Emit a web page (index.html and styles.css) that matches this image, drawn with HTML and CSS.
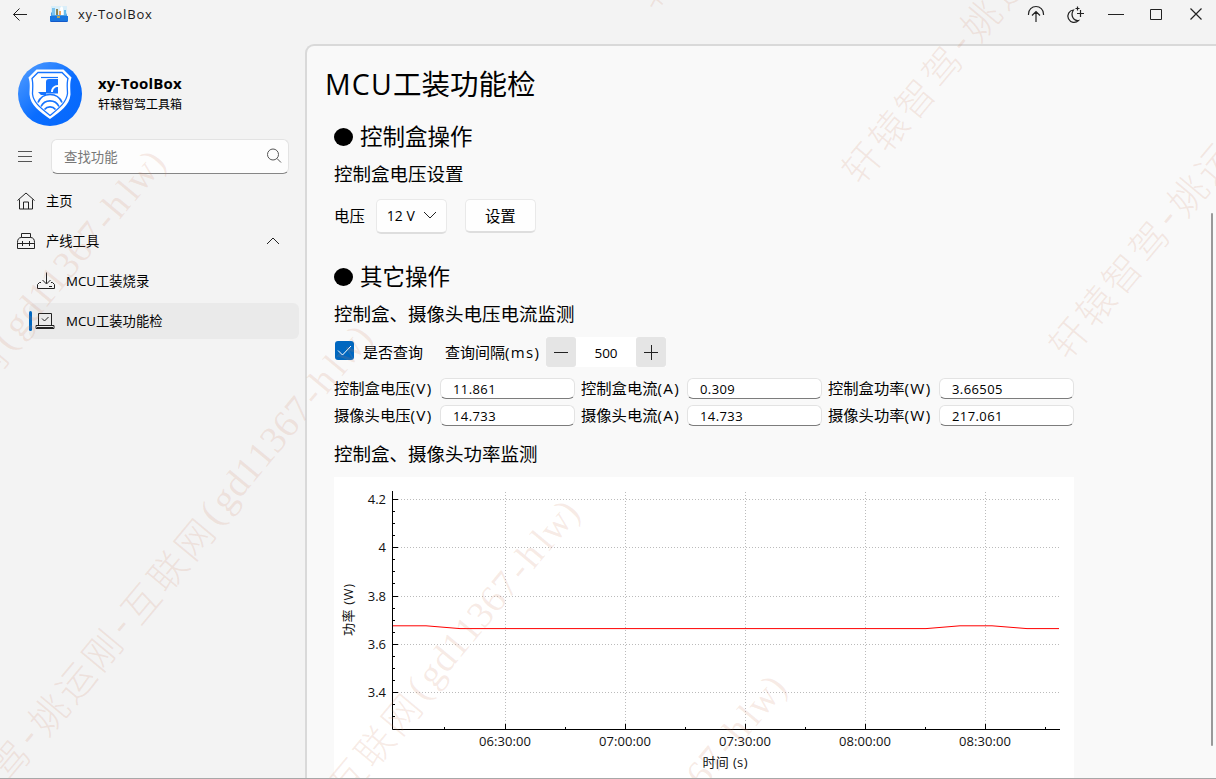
FILE: index.html
```html
<!DOCTYPE html>
<html lang="zh-CN">
<head>
<meta charset="utf-8">
<title>xy-ToolBox</title>
<link rel="stylesheet" href="styles.css">
</head>
<body>
<div class="window">
  <header class="titlebar">
    <svg class="back" width="40" height="28" viewBox="0 0 40 28"><path d="M27 14.5H13.5M19.5 8.5l-6 6 6 6"/></svg>
    <svg class="app-icon" width="20" height="20" viewBox="0 0 20 20">
      <rect x="2" y="2" width="16" height="10" fill="#d9eef9"/>
      <path d="M3 4h3v8H3z" fill="#7cc4ee"/><path d="M7 5h2v7H7z" fill="#8b8450"/><path d="M11 4l2-2 1 2v8h-2z" fill="#fff"/><path d="M15 6h2v6h-2z" fill="#66bdf0"/>
      <path d="M10 7h2v5h-2z" fill="#f0a860"/><path d="M2 9l1-1v3h14l1-2v4H2z" fill="#4c9fe4"/>
      <path d="M1 12h18v5q0 1-1 1H2q-1 0-1-1z" fill="#1976df"/><path d="M2 17h16v1H2z" fill="#1459c8"/><path d="M8 12h3v2H8z" fill="#b5a15a"/>
    </svg>
    <span class="app-name">xy-ToolBox</span>
    <nav class="caption">
      <svg width="40" height="28" viewBox="0 0 40 28"><path stroke-width="1.200" d="M12.500 15v-1a7.500 7.500 0 0 1 15 0v1M20 22V12M16 15.500l4-4 4 4"/></svg>
      <svg width="40" height="28" viewBox="0 0 40 28"><path stroke-width="1.200" d="M17.500 10a6.200 6.200 0 1 0 5 10.500c-5 .8-8.500-5.500-5-10.500zM19.500 8.500h4M21.500 6.500v4M21 13.500h7M24.500 10v7"/></svg>
      <svg width="40" height="28" viewBox="0 0 40 28"><path d="M12 14.500h16"/></svg>
      <svg width="40" height="28" viewBox="0 0 40 28"><path d="M14.500 9.500h11v10h-11z"/></svg>
      <svg width="40" height="28" viewBox="0 0 40 28"><path stroke-width="1.200" d="M14.500 8.500l11 11M25.500 8.500l-11 11"/></svg>
    </nav>
  </header>
  <div class="body">
    <aside class="sidebar">
      <div class="profile">
        <svg width="64" height="64" viewBox="0 0 64 64">
          <defs><linearGradient id="disc" x1="0" y1="0" x2="1" y2="1"><stop offset="0" stop-color="#56a0ff"/><stop offset=".55" stop-color="#0a6dff"/><stop offset="1" stop-color="#0567fb"/></linearGradient></defs>
          <circle cx="32" cy="32" r="32" fill="url(#disc)"/>
          <path d="M18.500 7.500h27l8 8c-2 6-1 11-1 17-1 11-10 17-20.500 24.500C21.500 49.500 12.500 43.500 11.500 32.500c0-6 1-11-1-17z" fill="#fff"/>
          <path d="M20 10.500h24l6 6c-1.500 5-.5 10-.5 15-1 9-9 15-17.500 22C23.500 46.500 15.500 41 14.500 32c0-5 1-10-.5-15.500z" fill="none" stroke="#1674ff" stroke-width="1.300"/>
          <path d="M23 15.500h17" stroke="#1674ff" stroke-width="1.200"/>
          <path d="M31 17h9v6c-4 0-7 3-7 7h-5V20q0-3 3-3z" fill="#1674ff"/><path d="M35 30c0-3 2-5 5-5v5zM20 30h20v1.500H28V33h-5z" fill="#1674ff"/>
          <g fill="none" stroke="#1674ff" stroke-width="1.700"><path d="M20 40.500a13 13 0 0 1 24 0M23 44.500a10 10 0 0 1 18 0M26.500 47.500a7 7 0 0 1 11 0"/></g>
        </svg>
        <div class="names"><strong>xy-ToolBox</strong><span>轩辕智驾工具箱</span></div>
      </div>
      <div class="search-row">
        <svg width="16" height="16" viewBox="0 0 16 16"><path d="M1 2.500h14M1 7.500h14M1 12.500h14"/></svg>
        <div class="search"><span>查找功能</span>
          <svg width="16" height="16" viewBox="0 0 16 16"><circle cx="7" cy="6.500" r="5.500"/><path d="M11 10.500l4 4"/></svg></div>
      </div>
      <ul class="menu">
        <li><svg width="20" height="20" viewBox="0 0 20 20"><path d="M1.500 9.500L10 2l8.500 7.500M3.500 8.500v9.500h13V8.500M7.500 18v-7h5v7"/></svg><span>主页</span></li>
        <li><svg width="20" height="20" viewBox="0 0 20 20"><path d="M5.500 6.500v-4h9v4M1.500 11.500q0-5 4-5h9q4 0 4 5v6h-17zM1.500 12.500h17M6.500 10v5M13.500 10v5"/></svg><span>产线工具</span>
          <svg class="chevron" width="14" height="10" viewBox="0 0 14 10"><path d="M1 8l6-6 6 6"/></svg></li>
        <li class="child"><svg width="20" height="20" viewBox="0 0 20 20"><path d="M10.500 1.500v11M6.500 9l4 4 4-4M5 11.500H3.500l-2 2v4h17v-4l-2-2H15M13 15.500h3"/></svg><span>MCU工装烧录</span></li>
        <li class="child active"><svg width="20" height="20" viewBox="0 0 20 20"><path d="M3.500 14.500v-12h13v12M7 7.500l2.500 2.500 4-4M1 14.500h18v3H1zM2 16.500h16"/></svg><span>MCU工装功能检</span></li>
      </ul>
    </aside>
    <main class="panel">
      <h1><span class="latin">MCU</span>工装功能检</h1>
      <section class="control">
        <h2><i></i>控制盒操作</h2>
        <h3>控制盒电压设置</h3>
        <div class="voltage-row">
          <label>电压</label>
          <div class="combo">12 V<svg width="14" height="10" viewBox="0 0 14 10"><path d="M1 1l6 6 6-6"/></svg></div>
          <button class="push">设置</button>
        </div>
      </section>
      <section class="others">
        <h2><i></i>其它操作</h2>
        <h3>控制盒、摄像头电压电流监测</h3>
        <div class="query-row">
          <span class="check"><svg width="19" height="19" viewBox="0 0 19 19"><path d="M3 9.500l4.500 4.500L16 5"/></svg></span>
          <span class="check-label">是否查询</span>
          <span class="interval">查询间隔<span class="unit">(ms)</span></span>
          <div class="stepper">
            <svg width="30" height="30" viewBox="0 0 30 30"><path d="M8 15.500h14"/></svg>
            <span>500</span>
            <svg width="30" height="30" viewBox="0 0 30 30"><path d="M8 15.500h14M15.500 8v15"/></svg>
          </div>
        </div>
        <div class="readings">
          <label>控制盒电压<span class="unit">(V)</span></label><div class="field">11.861</div>
          <label>控制盒电流<span class="unit">(A)</span></label><div class="field">0.309</div>
          <label>控制盒功率<span class="unit">(W)</span></label><div class="field">3.66505</div>
          <label>摄像头电压<span class="unit">(V)</span></label><div class="field">14.733</div>
          <label>摄像头电流<span class="unit">(A)</span></label><div class="field">14.733</div>
          <label>摄像头功率<span class="unit">(W)</span></label><div class="field">217.061</div>
        </div>
        <h3 class="chart-title">控制盒、摄像头功率监测</h3>
        <svg class="chart" width="740" height="302" viewBox="334 477 740 302">
          <path class="grid" d="M398 499.500H1059M398 547.500H1059M398 596.500H1059M398 644.500H1059M398 692.500H1059M505.500 492V724M625.500 492V724M745.500 492V724M865.500 492V724M985.500 492V724"/>
          <path class="axis" d="M392.500 491V729.500H1060M393 499.500h5M393 547.500h5M393 596.500h5M393 644.500h5M393 692.500h5M505.500 729v-5M625.500 729v-5M745.500 729v-5M865.500 729v-5M985.500 729v-5"/>
          <path class="axis" d="M393 511.500h2M393 523.500h2M393 535.500h2M393 559.500h2M393 571.500h2M393 583.500h2M393 608.500h2M393 620.500h2M393 632.500h2M393 656.500h2M393 668.500h2M393 680.500h2M393 704.500h2M393 716.500h2M444.500 729v-2M565.500 729v-2M685.500 729v-2M805.500 729v-2M925.500 729v-2M1045.500 729v-2"/>
          <path class="series" d="M393 625.800H426L460 628.600H926L960 625.800H992L1027 628.600H1059"/>
          <g class="ylab"><text x="386" y="504">4.2</text><text x="386" y="552">4</text><text x="386" y="601">3.8</text><text x="386" y="649">3.6</text><text x="386" y="697">3.4</text></g>
          <g class="xlab"><text x="505" y="746" textLength="52">06:30:00</text><text x="625" y="746" textLength="52">07:00:00</text><text x="745" y="746" textLength="52">07:30:00</text><text x="865" y="746" textLength="52">08:00:00</text><text x="985" y="746" textLength="52">08:30:00</text>
            <text x="725" y="767" textLength="45">时间 (s)</text><text transform="translate(353 610) rotate(-90)" textLength="52">功率 (W)</text></g>
        </svg>
      </section>
      <div class="scrollbar"></div>
    </main>
  </div>
  <svg class="watermark" width="1216" height="779" viewBox="0 0 1216 779"></svg>
</div>
<script src="watermark.js"></script>
</body>
</html>
```
FILE: watermark.js
```js
// Tiles the diagonal user watermark across the whole window.
const layer = document.querySelector('.watermark');
const label = '轩辕智驾-姚运刚-互联网(gd11367-hlw)';
const full = 41.6, half = 19.4;
const chars = [...label];
const isLatin = ch => ch.charCodeAt(0) < 256;
let cursor = -full / 2;
const xs = chars.map(ch => {
  const advance = isLatin(ch) ? half : full;
  const centre = cursor + advance / 2;
  cursor += advance;
  return centre.toFixed(1);
});
const ys = chars.map(ch => isLatin(ch) ? 9 : 14);
const origins = [[654, -12], [861, 163], [1068, 338], [-277, 682], [-70, 857], [137, 1032], [344, 1207]];
for (const [x, y] of origins.slice(0, 3)) addLine(x + 1, y);
for (const [x, y] of origins.slice(3)) addLine(x, y);
// The tile one step above the last row carries the lower-centre line.
function addLine(x, y) {
  const text = document.createElementNS('http://www.w3.org/2000/svg', 'text');
  text.setAttribute('transform', `translate(${x} ${y}) rotate(-50.2)`);
  text.setAttribute('x', xs.join(' '));
  text.setAttribute('y', ys.join(' '));
  text.textContent = label;
  layer.append(text);
}
```
FILE: styles.css
```css
* { box-sizing: border-box; }
body { margin: 0; font-family: "Open Sans", "Noto Sans CJK SC", sans-serif; color: #000; font-size: 13px; }
svg { fill: none; stroke: #222; stroke-width: 1; flex: none; display: block; }
h1, h2, h3, ul { margin: 0; padding: 0; font-weight: 400; }
.window { position: relative; width: 1216px; height: 779px; overflow: hidden; background: #f3f3f3; border-bottom: 1px solid #a8a8a8; display: flex; flex-direction: column; white-space: nowrap; }
.titlebar { height: 44px; display: flex; align-items: flex-start; }
.app-icon { stroke: none; margin: 4px 9px 0 9px; }
.app-name { line-height: 28px; letter-spacing: .8px; color: #1a1a1a; }
.caption { display: flex; margin-left: auto; }
.body { flex: 1; display: flex; min-height: 0; }
.sidebar { width: 305px; padding-top: 18px; }
.profile { display: flex; gap: 16px; padding-left: 18px; height: 64px; }
.profile svg { stroke: none; }
.names { display: flex; flex-direction: column; padding-top: 10px; }
.names strong { font-size: 15px; line-height: 22px; letter-spacing: .2px; }
.names span { font-size: 12px; line-height: 21px; }
.search-row { display: flex; gap: 18px; padding: 13px 0 0 17px; align-items: center; }
.search-row svg { stroke: #555; }
.search { width: 238px; height: 35px; padding: 0 6px 1px 12px; border: 1px solid #e3e3e3; border-bottom: 1.500px solid #868686; border-radius: 6px; background: #fdfdfd; display: flex; align-items: center; justify-content: space-between; color: #777; font-size: 13.4px; }
.menu { list-style: none; padding: 9px 6px 0 5px; display: flex; flex-direction: column; gap: 4px; }
.menu li { height: 36px; display: flex; align-items: center; gap: 10px; padding-left: 11px; border-radius: 6px; font-size: 13.300px; }
.menu li span { padding-bottom: 1px; }
.menu .child { margin-left: 25px; padding-left: 6px; }
.menu .active { background: #eaeaea; margin-left: 24px; padding-left: 0; gap: 10px; }
.menu .active::before { content: ""; width: 3px; height: 20px; border-radius: 2px; background: #0067c0; margin-right: -6px; }
.menu .active svg { margin-left: -1px; margin-right: 1px; }
.chevron { margin: 0 19px 0 auto; }
.panel { position: relative; flex: 1; border: 2px solid #d9d9d9; border-width: 2px 0 0 2px; border-radius: 9px 0 0 0; background: #f9f9f9; padding: 16px 0 0 18px; overflow: hidden; }
h1 { font-size: 28.5px; line-height: 44px; height: 44px; }
.latin { letter-spacing: 1.2px; }
.control, .others { padding-left: 9px; }
h2 { font-size: 22.500px; line-height: 34px; display: flex; align-items: center; gap: 7px; }
h2 i { width: 19px; height: 18px; border-radius: 50%; background: #000; }
.control { padding-top: 14px; }
h3 { font-size: 18.500px; line-height: 28px; margin-top: 6px; }
.voltage-row { display: flex; align-items: center; height: 36px; margin-top: 10px; font-size: 15.400px; }
.voltage-row label { padding-bottom: 1px; }
.combo { width: 71px; height: 35px; margin-left: 11px; padding: 0 9px 0 10px; display: flex; align-items: center; justify-content: space-between; border: 1px solid #e9e9e9; border-bottom: 2px solid #dedede; border-radius: 5px; background: #fefefe; font-size: 14px; }
.push { width: 71px; height: 34px; margin-left: 18px; border: 1px solid #e9e9e9; border-bottom: 2px solid #dedede; border-radius: 5px; background: #fefefe; font: inherit; padding: 0; }
.others { padding-top: 26px; }
.query-row { display: flex; align-items: center; height: 30px; margin-top: 9px; font-size: 15px; line-height: 26px; }
.check-label, .interval { padding-bottom: 1px; }
.check { background: #0067c0; border-radius: 3px; margin: -4px 9px 0 1px; }
.check svg { stroke: #fff; }
.interval { width: 101px; margin-left: 22px; }
.unit { letter-spacing: 1.3px; }
.stepper { display: flex; height: 30px; background: #fff; }
.stepper svg { background: #e5e5e5; border-radius: 3px; }
.stepper span { width: 60px; text-align: center; line-height: 32px; font-size: 13.500px; }
.readings { display: grid; grid-template-columns: 106px 141px 106px 141px 111px 135px; grid-auto-rows: 21px; row-gap: 6px; margin-top: 11px; font-size: 15.300px; }
.readings label { line-height: 21px; }
.field { width: 135px; border: 1px solid #e3e3e3; border-bottom-color: #7c7c7c; border-radius: 6px; background: #fff; padding-left: 12px; font-size: 13px; letter-spacing: .4px; line-height: 20px; }
.chart-title { margin-top: 14px; }
.chart { background: #fff; margin-top: 9px; }
.grid { stroke: #bbb; stroke-dasharray: 1 2; }
.axis { stroke: #000; }
.series { stroke: #f00; }
.chart text { fill: #111; stroke: none; font-size: 13px; }
.ylab { text-anchor: end; }
.xlab { text-anchor: middle; }
.scrollbar { position: absolute; right: 3px; top: 167px; width: 2px; height: 533px; background: #999; border-radius: 1px; }
.watermark { position: absolute; inset: 0; pointer-events: none; stroke: none; }
.watermark text { font-family: "Liberation Serif", "Noto Sans CJK SC", serif; font-size: 38px; font-weight: 300; text-anchor: middle; fill: rgba(206, 130, 100, .16); }
```
